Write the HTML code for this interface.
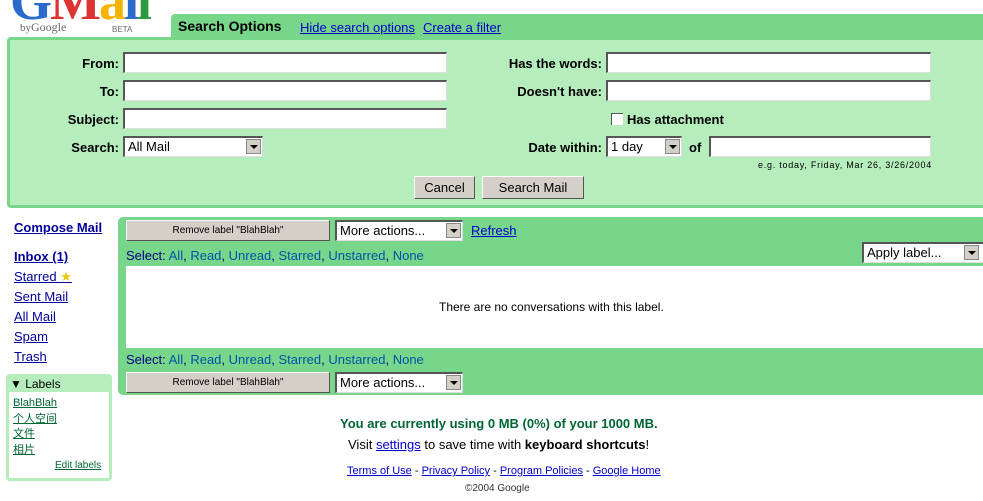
<!DOCTYPE html>
<html><head><meta charset="utf-8"><style>
body{margin:0;width:983px;height:501px;overflow:hidden;background:#fff;font-family:Arial,"Liberation Sans",sans-serif;font-size:13px;position:relative}
.a{position:absolute}
a{color:#0000cc}
.lbl{position:absolute;font-weight:bold;font-size:13px;text-align:right;color:#000}
.in{position:absolute;background:#fff;border-top:2px solid #555;border-left:2px solid #555;border-right:1px solid #ddd;border-bottom:1px solid #ddd;box-sizing:border-box}
.sel{position:absolute;background:#fff;border-top:2px solid #555;border-left:2px solid #555;border-bottom:1px solid #ddd;border-right:1px solid #ddd;box-sizing:border-box;font-size:13px;padding-left:3px;line-height:17px}
.sel i{position:absolute;right:1px;top:1px;width:15px;height:15px;background:#d4d0c8;border:1px solid #888;box-sizing:border-box}
.sel i:after{content:"";position:absolute;left:3px;top:5px;border-left:4px solid transparent;border-right:4px solid transparent;border-top:4px solid #000}
.btn{position:absolute;background:#d4d0c8;border:1px solid #fff;border-right-color:#555;border-bottom-color:#555;box-sizing:border-box;text-align:center;font-size:13px;color:#000}
.nav a{display:block;position:absolute;left:14px;color:#000099;font-size:13px}
.sl{color:#00007f}.sl a{color:#0055aa;text-decoration:none}
</style></head><body>
<div class="a" style="left:10px;top:-30px;font:bold 54px 'Liberation Serif',serif;letter-spacing:-2px"><span style="color:#2a6bcc">G</span><span style="color:#d33">M</span><span style="color:#f4b400">a</span><span style="color:#2a6bcc">i</span><span style="color:#2a9a3a">l</span></div>
<div class="a" style="left:20px;top:20px;font:11px 'Liberation Serif',serif;color:#666">by<span style="font-size:12px">Google</span></div>
<div class="a" style="left:112px;top:25px;font-size:8px;color:#666">BETA</div>
<div class="a" style="left:171px;top:14px;width:812px;height:26px;background:#77d68a;border-radius:4px 0 0 0"></div>
<div class="a" style="left:178px;top:18px;font-weight:bold;font-size:14px">Search Options</div>
<a class="a" style="left:300px;top:20px" href="#">Hide search options</a>
<a class="a" style="left:423px;top:20px" href="#">Create a filter</a>
<div class="a" style="left:7px;top:37px;width:990px;height:171px;background:#b5edbc;border:3px solid #77d68a;box-sizing:border-box;border-radius:4px"></div>
<div class="lbl" style="left:40px;width:79px;top:56px">From:</div>
<div class="in" style="left:123px;top:52px;width:324px;height:21px"></div>
<div class="lbl" style="left:40px;width:79px;top:84px">To:</div>
<div class="in" style="left:123px;top:80px;width:324px;height:21px"></div>
<div class="lbl" style="left:40px;width:79px;top:112px">Subject:</div>
<div class="in" style="left:123px;top:108px;width:324px;height:21px"></div>
<div class="lbl" style="left:40px;width:79px;top:140px">Search:</div>
<div class="sel" style="left:123px;top:136px;width:140px;height:21px">All Mail<i></i></div>
<div class="lbl" style="left:460px;width:142px;top:56px">Has the words:</div>
<div class="in" style="left:606px;top:52px;width:325px;height:21px"></div>
<div class="lbl" style="left:460px;width:142px;top:84px">Doesn't have:</div>
<div class="in" style="left:606px;top:80px;width:325px;height:21px"></div>
<div class="a" style="left:611px;top:113px;width:11px;height:11px;background:#fff;border-top:1px solid #555;border-left:1px solid #555"></div>
<div class="lbl" style="left:627px;top:112px">Has attachment</div>
<div class="lbl" style="left:460px;width:142px;top:140px">Date within:</div>
<div class="sel" style="left:606px;top:136px;width:76px;height:21px">1 day<i></i></div>
<div class="lbl" style="left:689px;top:140px">of</div>
<div class="in" style="left:709px;top:136px;width:222px;height:21px"></div>
<div class="a" style="left:758px;top:160px;font-size:9px;color:#000;letter-spacing:.75px">e.g. today, Friday, Mar 26, 3/26/2004</div>
<div class="btn" style="left:414px;top:176px;width:61px;height:23px;line-height:21px">Cancel</div>
<div class="btn" style="left:482px;top:176px;width:102px;height:23px;line-height:21px">Search Mail</div>
<div class="nav">
<a href="#" style="top:220px;font-weight:bold">Compose Mail</a>
<a href="#" style="top:249px;font-weight:bold">Inbox (1)</a>
<a href="#" style="top:269px">Starred <span style="color:#e8c800;text-decoration:none">★</span></a>
<a href="#" style="top:289px">Sent Mail</a>
<a href="#" style="top:309px">All Mail</a>
<a href="#" style="top:329px">Spam</a>
<a href="#" style="top:349px">Trash</a>
</div>
<div class="a" style="left:6px;top:374px;width:106px;height:107px;background:#b5edbc;border-radius:4px"></div>
<div class="a" style="left:9px;top:392px;width:100px;height:86px;background:#fff"></div>
<div class="a" style="left:10px;top:377px;font-size:12px">▼ Labels</div>
<div class="a" style="left:13px;top:396px;font-size:11px;line-height:15.5px;font-family:'Liberation Sans','Noto Sans CJK SC',sans-serif"><a href="#" style="color:#006633">BlahBlah</a><br><a href="#" style="color:#006633">个人空间</a><br><a href="#" style="color:#006633">文件</a><br><a href="#" style="color:#006633">相片</a></div>
<a class="a" href="#" style="left:55px;top:460px;font-size:10px;color:#006633">Edit labels</a>
<div class="a" style="left:118px;top:217px;width:870px;height:178px;background:#77d68a;border-radius:5px 0 0 5px"></div>
<div class="a" style="left:126px;top:266px;width:860px;height:82px;background:#fff"></div>
<div class="btn" style="left:126px;top:220px;width:204px;height:21px;font-size:10px;line-height:19px">Remove label "BlahBlah"</div>
<div class="sel" style="left:335px;top:220px;width:128px;height:21px;line-height:17px">More actions...<i></i></div>
<a class="a" href="#" style="left:471px;top:223px">Refresh</a>
<div class="a sl" style="left:126px;top:248px">Select: <a href="#">All</a>, <a href="#">Read</a>, <a href="#">Unread</a>, <a href="#">Starred</a>, <a href="#">Unstarred</a>, <a href="#">None</a></div>
<div class="sel" style="left:862px;top:242px;width:130px;height:21px">Apply label...<i style="right:12px"></i></div>
<div class="a" style="left:439px;top:300px;font-size:12px">There are no conversations with this label.</div>
<div class="a sl" style="left:126px;top:352px">Select: <a href="#">All</a>, <a href="#">Read</a>, <a href="#">Unread</a>, <a href="#">Starred</a>, <a href="#">Unstarred</a>, <a href="#">None</a></div>
<div class="btn" style="left:126px;top:372px;width:204px;height:21px;font-size:10px;line-height:19px">Remove label "BlahBlah"</div>
<div class="sel" style="left:335px;top:372px;width:128px;height:21px;line-height:17px">More actions...<i></i></div>
<div class="a" style="left:340px;top:416px;font-weight:bold;color:#006633;font-size:13px">You are currently using 0 MB (0%) of your 1000 MB.</div>
<div class="a" style="left:348px;top:437px;font-size:13px">Visit <a href="#">settings</a> to save time with <b>keyboard shortcuts</b>!</div>
<div class="a" style="left:347px;top:465px;font-size:11px"><a href="#">Terms of Use</a> - <a href="#">Privacy Policy</a> - <a href="#">Program Policies</a> - <a href="#">Google Home</a></div>
<div class="a" style="left:465px;top:483px;font-size:10px;color:#333">©2004 Google</div>
</body></html>
